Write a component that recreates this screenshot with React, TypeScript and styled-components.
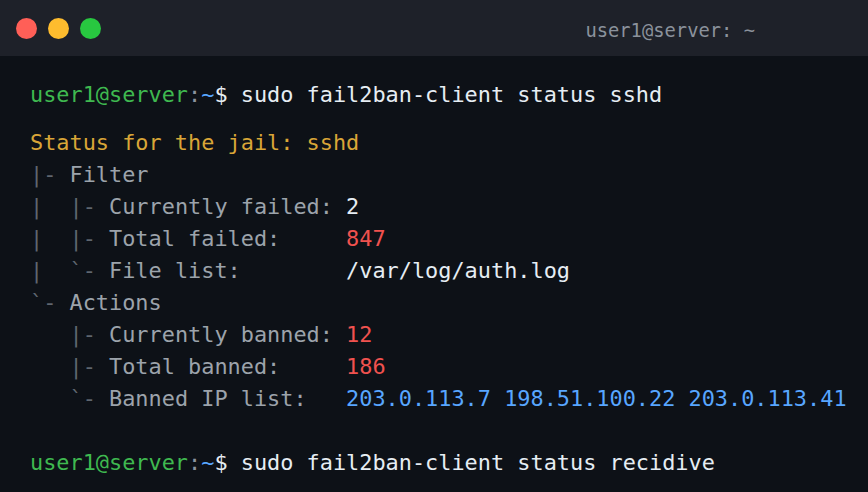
import React from "react";
import styled, { createGlobalStyle } from "styled-components";

const Global = createGlobalStyle`
  html, body { margin: 0; padding: 0; background: #0d1117; }
  body { width: 868px; height: 492px; overflow: hidden; }
`;

const Window = styled.div`
  width: 868px;
  height: 492px;
  background: #0d1117;
  display: flex;
  flex-direction: column;
  font-family: "DejaVu Sans Mono", "Liberation Mono", monospace;
`;

const TitleBar = styled.div`
  height: 56px;
  flex: 0 0 56px;
  background: #1e2129;
  display: flex;
  align-items: center;
  padding: 0 113px 0 16px;
  box-sizing: border-box;
`;

const Dots = styled.div`
  display: flex;
  gap: 11px;
`;

const Dot = styled.span<{ $c: string }>`
  width: 21px;
  height: 21px;
  border-radius: 50%;
  background: ${(p) => p.$c};
  display: block;
`;

const Title = styled.div`
  margin-left: auto;
  color: #8b929c;
  font-size: 18.8px;
  padding-top: 4px;
  white-space: pre;
`;

const Body = styled.div`
  padding: 23px 0 0 30px;
  font-size: 21.88px;
  line-height: 32px;
  white-space: pre;
  color: #e6edf3;
`;

const Line = styled.div<{ $gapAfter?: number }>`
  height: 32px;
  margin-bottom: ${(p) => p.$gapAfter ?? 0}px;
`;

const User = styled.span`color: #3fb950;`;
const Colon = styled.span`color: #8b949e;`;
const Tilde = styled.span`color: #58a6ff;`;
const Cmd = styled.span`color: #e6edf3;`;
const Head = styled.span`color: #d9a637;`;
const Tree = styled.span`color: #5f6670;`;
const Label = styled.span`color: #9ca3ab;`;
const Val = styled.span<{ $kind?: "num" | "ip" | "plain" }>`
  color: ${(p) =>
    p.$kind === "num" ? "#f0524f" : p.$kind === "ip" ? "#58a6ff" : "#e6edf3"};
`;

const Prompt: React.FC<{ cmd: string; gap?: number }> = ({ cmd, gap }) => (
  <Line $gapAfter={gap}>
    <User>user1@server</User>
    <Colon>:</Colon>
    <Tilde>~</Tilde>
    <Cmd>$ {cmd}</Cmd>
  </Line>
);

const rows: { tree: string; label: string; val?: string; kind?: "num" | "ip" | "plain" }[] = [
  { tree: "|- ", label: "Filter" },
  { tree: "|  |- ", label: "Currently failed: ", val: "2", kind: "plain" },
  { tree: "|  |- ", label: "Total failed:     ", val: "847", kind: "num" },
  { tree: "|  `- ", label: "File list:        ", val: "/var/log/auth.log", kind: "plain" },
  { tree: "`- ", label: "Actions" },
  { tree: "   |- ", label: "Currently banned: ", val: "12", kind: "num" },
  { tree: "   |- ", label: "Total banned:     ", val: "186", kind: "num" },
  {
    tree: "   `- ",
    label: "Banned IP list:   ",
    val: "203.0.113.7 198.51.100.22 203.0.113.41",
    kind: "ip",
  },
];

export default function App() {
  return (
    <>
      <Global />
      <Window>
        <TitleBar>
          <Dots>
            <Dot $c="#ff5f57" />
            <Dot $c="#febc2e" />
            <Dot $c="#28c840" />
          </Dots>
          <Title>user1@server: ~</Title>
        </TitleBar>
        <Body>
          <Prompt cmd="sudo fail2ban-client status sshd" gap={16} />
          <Line>
            <Head>Status for the jail: sshd</Head>
          </Line>
          {rows.map((r, i) => (
            <Line key={i} $gapAfter={i === rows.length - 1 ? 32 : 0}>
              <Tree>{r.tree}</Tree>
              <Label>{r.label}</Label>
              {r.val && <Val $kind={r.kind}>{r.val}</Val>}
            </Line>
          ))}
          <Prompt cmd="sudo fail2ban-client status recidive" />
        </Body>
      </Window>
    </>
  );
}
